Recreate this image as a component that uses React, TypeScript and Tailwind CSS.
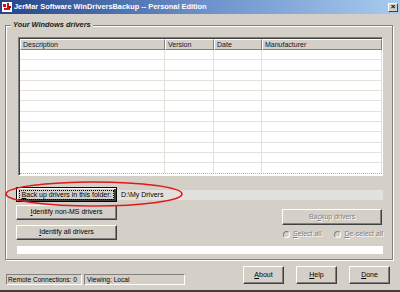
import React from 'react';

const font = { fontFamily: '"Liberation Sans", Arial, sans-serif' };

const raised =
  'border border-t-white border-l-white border-r-[#404040] border-b-[#404040] shadow-[inset_-1px_-1px_0_#808080] bg-[#d4d0c8]';

const Btn: React.FC<{ className?: string; children: React.ReactNode }> = ({ className = '', children }) => (
  <div className={`${raised} flex items-center justify-center text-[7px] text-black ${className}`}>{children}</div>
);

const u = (s: string) => <span className="underline">{s}</span>;

const cols = [
  { name: 'Description', w: 'w-[145px]' },
  { name: 'Version', w: 'w-[49px]' },
  { name: 'Date', w: 'w-[48px]' },
  { name: 'Manufacturer', w: 'flex-1' },
];

const Radio: React.FC<{ label: React.ReactNode }> = ({ label }) => (
  <div className="flex items-center gap-[3px]">
    <span className="w-[7px] h-[7px] rounded-full border border-t-[#808080] border-l-[#808080] border-r-white border-b-white bg-[#d4d0c8]" />
    <span className="text-[7px] text-[#808080] [text-shadow:1px_1px_0_#fff]">{label}</span>
  </div>
);

export default function App() {
  return (
    <div className="relative w-[400px] h-[292px] bg-[#d4d0c8] overflow-hidden border-b-2 border-[#404040]" style={font}>
      {/* title bar */}
      <div className="h-[14px] flex items-center bg-linear-to-r from-[#24468a] via-[#6c8fca] to-[#a8cbee] pl-[2px] pr-[2px]">
        <svg width="10" height="10" viewBox="0 0 10 10" className="shrink-0">
          <rect x="0" y="0" width="10" height="10" fill="#fff" />
          <rect x="1" y="2" width="3" height="3" fill="#d01010" />
          <rect x="5" y="1" width="2" height="5" fill="#d01010" />
          <rect x="2" y="6" width="6" height="2" fill="#d01010" />
          <rect x="7" y="4" width="2" height="2" fill="#a00000" />
        </svg>
        <span className="ml-[2px] text-[7.4px] font-bold text-white whitespace-nowrap">
          JerMar Software WinDriversBackup -- Personal Edition
        </span>
        <div className="ml-auto w-[10px] h-[9px] border border-t-white border-l-white border-r-[#404040] border-b-[#404040] bg-[#d4d0c8] flex items-center justify-center text-[8px] leading-none font-bold text-black">
          ×
        </div>
      </div>

      {/* group box */}
      <div className="relative mt-[11px] ml-[5px] w-[388px] h-[235px] border border-[#808080] shadow-[inset_1px_1px_0_#fff,1px_1px_0_#fff] pl-[11px] pt-[11px]">
        <span className="absolute -top-[6px] left-[5px] px-[2px] bg-[#d4d0c8] text-[7.4px] font-bold italic text-[#1a1a1a] leading-[10px]">
          Your Windows drivers
        </span>

        {/* list view */}
        <div className="ml-[1px] w-[365px] h-[139px] bg-white border border-t-[#808080] border-l-[#808080] border-b-white border-r-white shadow-[inset_1px_1px_0_#404040] pl-[1px] pt-[1px] flex flex-col">
          <div className="flex h-[11px] shrink-0">
            {cols.map((c) => (
              <div
                key={c.name}
                className={`${c.w} h-full bg-[#d4d0c8] border border-t-white border-l-white border-r-[#808080] border-b-[#808080] text-[7px] leading-[9px] pl-[2px] text-[#101030]`}
              >
                {c.name}
              </div>
            ))}
          </div>
          <div className="flex flex-col">
            {Array.from({ length: 12 }).map((_, i) => (
              <div
                key={i}
                className={`flex h-[10.3px] border-b ${i === 11 ? 'border-dotted border-[#e0a0a0]' : 'border-[#e4e1da]'}`}
              >
                {cols.map((c) => (
                  <div key={c.name} className={`${c.w} h-full border-r border-[#e4e1da]`} />
                ))}
              </div>
            ))}
          </div>
        </div>

        {/* folder row */}
        <div className="mt-[11px] flex items-center -ml-[1px]">
          <div className="w-[101px] h-[15px] border border-black shadow-[inset_1px_1px_0_#fff,inset_-2px_-2px_0_#404040] bg-[#d4d0c8] flex items-center justify-center">
            <span className="px-[2px] border border-dotted border-black text-[7px] leading-[8px] text-black">
              {u('B')}ack up drivers in this folder:
            </span>
          </div>
          <div className="w-[266px] h-[10px] bg-[#e2e1dd] text-[7px] leading-[10px] pl-[4px] text-black">D:\My Drivers</div>
        </div>

        <div className="flex -ml-[1px]">
          <div className="flex flex-col">
            <Btn className="mt-[3px] w-[101px] h-[15px]">{u('I')}dentify non-MS drivers</Btn>
            <Btn className="mt-[5px] w-[101px] h-[15px]">{u('I')}dentify all drivers</Btn>
          </div>
          <div className="ml-auto mr-[9px] flex flex-col items-start mt-[7px]">
            <div className="w-[100px] h-[16px] border border-t-white border-l-white border-r-[#404040] border-b-[#404040] shadow-[inset_-1px_-1px_0_#808080] flex items-center justify-center text-[7px] text-[#808080] [text-shadow:1px_1px_0_#fff]">
              Ba{u('c')}kup drivers
            </div>
            <div className="mt-[4px] ml-[1px] flex gap-[13px]">
              <Radio label={<>{u('S')}elect all</>} />
              <Radio label={<>{u('D')}e-select all</>} />
            </div>
          </div>
        </div>

        <div className="mt-[6px] w-[366px] h-[8px] bg-white" />
      </div>

      {/* bottom bar */}
      <div className="flex items-start mt-[6px] pl-[6px]">
        <div className="mt-[8px] flex gap-[2px]">
          <div className="w-[76px] h-[11px] border border-t-[#808080] border-l-[#808080] border-b-white border-r-white text-[6.6px] leading-[9px] pl-[1px] text-black whitespace-nowrap overflow-hidden">
            Remote Connections: 0
          </div>
          <div className="w-[101px] h-[11px] border border-t-[#808080] border-l-[#808080] border-b-white border-r-white text-[6.6px] leading-[9px] pl-[2px] text-black">
            Viewing: Local
          </div>
        </div>
        <div className="ml-auto mr-[10px] flex gap-[12px]">
          <Btn className="w-[41px] h-[18px]">{u('A')}bout</Btn>
          <Btn className="w-[41px] h-[18px]">{u('H')}elp</Btn>
          <Btn className="w-[41px] h-[18px]">{u('D')}one</Btn>
        </div>
      </div>

      {/* red annotation ellipse */}
      <svg className="absolute left-0 top-0 pointer-events-none" width="400" height="292">
        <ellipse cx="94" cy="194" rx="88" ry="12" fill="none" stroke="#e01818" strokeWidth="1.6" />
      </svg>
    </div>
  );
}
